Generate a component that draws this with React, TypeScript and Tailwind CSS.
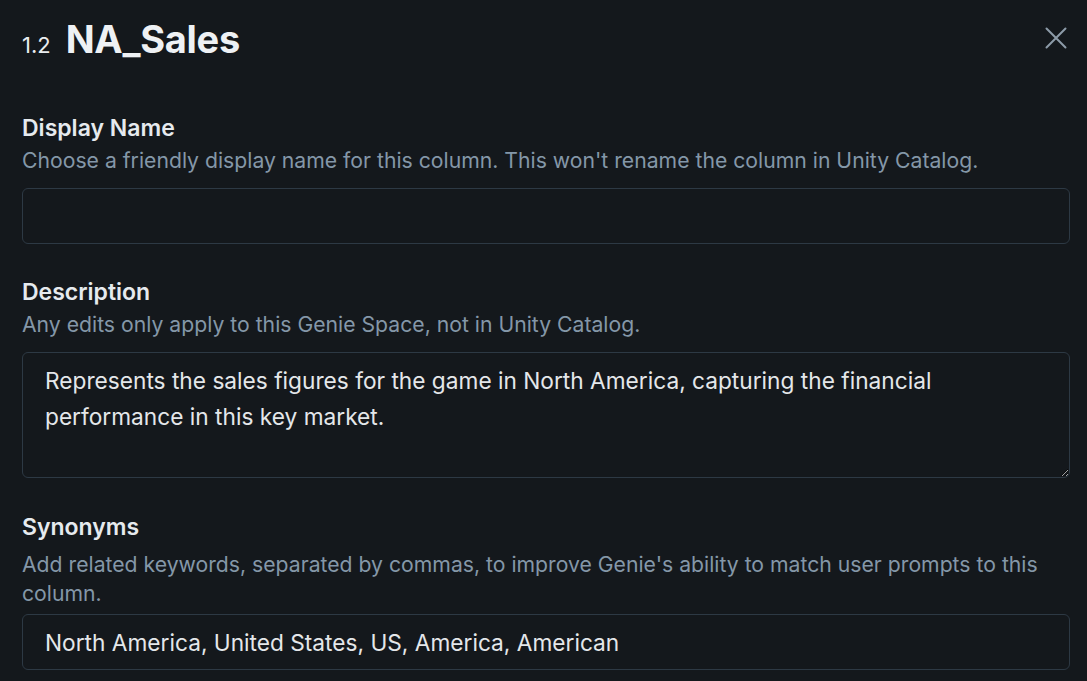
type FieldProps = {
  label: string
  hint: React.ReactNode
  labelGap?: string
  children: React.ReactNode
}

function Field({ label, hint, labelGap = "mt-[4px]", children }: FieldProps) {
  return (
    <div>
      <div className="text-[23px] font-semibold leading-[28px] text-[#e6eaee]">{label}</div>
      <div className={`${labelGap} text-[21.2px] leading-[29px] text-[#8497a8]`}>{hint}</div>
      {children}
    </div>
  )
}

export default function App() {
  return (
    <div className="min-h-screen bg-[#14181c] pl-[22px] pr-[17px] pt-[19px] font-['Inter',sans-serif]">
      <div className="flex items-start justify-between">
        <div className="flex items-baseline gap-[15px]">
          <span className="text-[22px] text-[#e9ecef]">1.2</span>
          <span className="text-[38px] font-bold leading-[40px] tracking-[-0.3px] text-[#eef1f4]">NA_Sales</span>
        </div>
        <button type="button" className="mr-[3px] mt-[8px] text-[#8d9ba8]">
          <svg width="22" height="22" viewBox="0 0 22 22" fill="none" stroke="currentColor" strokeWidth="2" strokeLinecap="round">
            <path d="M1.5 1.5 20.5 20.5M20.5 1.5 1.5 20.5" />
          </svg>
        </button>
      </div>

      <div className="mt-[52px]">
        <Field label="Display Name" hint="Choose a friendly display name for this column. This won't rename the column in Unity Catalog.">
          <input
            type="text"
            className="mt-[13px] block h-[56px] w-full rounded-[6px] border border-[#2d3944] bg-transparent px-[22px] text-[22.7px] text-[#e4e7ea] outline-none"
          />
        </Field>
      </div>

      <div className="mt-[34px]">
        <Field label="Description" hint="Any edits only apply to this Genie Space, not in Unity Catalog.">
          <textarea
            className="mt-[13px] block h-[126px] w-full rounded-[6px] border border-[#2d3944] bg-transparent px-[22px] pt-[10px] text-[22.7px] leading-[35.5px] text-[#e4e7ea] outline-none"
            defaultValue="Represents the sales figures for the game in North America, capturing the financial performance in this key market."
          />
        </Field>
      </div>

      <div className="mt-[35px]">
        <Field
          label="Synonyms"
          labelGap="mt-[9px]"
          hint={
            <>
              Add related keywords, separated by commas, to improve Genie's ability to match user prompts to this
              <br />
              column.
            </>
          }
        >
          <input
            type="text"
            className="mt-[6px] block h-[56px] w-full rounded-[6px] border border-[#2d3944] bg-transparent px-[22px] text-[22.7px] text-[#e4e7ea] outline-none"
            defaultValue="North America, United States, US, America, American"
          />
        </Field>
      </div>
    </div>
  )
}
